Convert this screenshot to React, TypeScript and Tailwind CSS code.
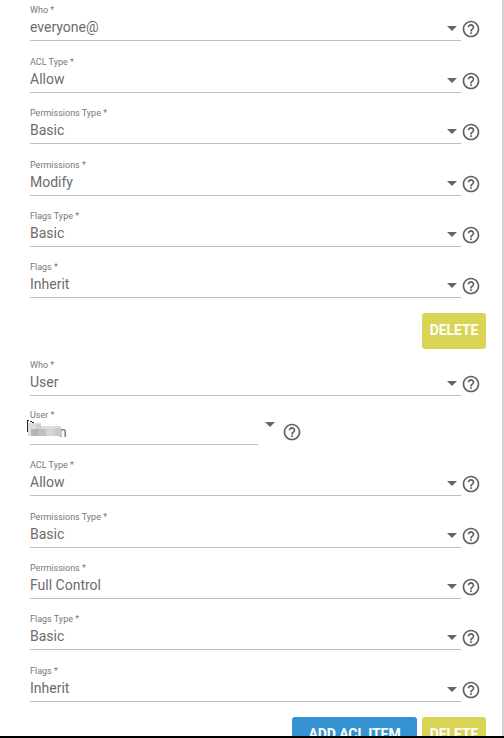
type FieldProps = { label: string; value: string; height: string };

function HelpIcon() {
  return (
    <svg viewBox="0 0 24 24" className="block h-5 w-5 shrink-0 fill-[#606060]">
      <path d="M11 18h2v-2h-2v2zm1-16C6.48 2 2 6.48 2 12s4.48 10 10 10 10-4.48 10-10S17.52 2 12 2zm0 18c-4.41 0-8-3.59-8-8s3.59-8 8-8 8 3.59 8 8-3.59 8-8 8zm0-14c-2.21 0-4 1.79-4 4h2c0-1.1.9-2 2-2s2 .9 2 2c0 2-3 1.75-3 5h2c0-2.25 3-2.5 3-5 0-2.21-1.79-4-4-4z" />
    </svg>
  );
}

function Arrow() {
  return (
    <svg viewBox="0 0 10 5" className="block h-[5px] w-[10px] shrink-0 fill-[#666666]">
      <path d="M0 0h10L5 5z" />
    </svg>
  );
}

function Label({ children }: { children: string }) {
  return <div className="h-3 pt-px text-[9px] leading-3 text-[#777777]">{children}</div>;
}

function Field({ label, value, height }: FieldProps) {
  return (
    <div className={`flex items-end ${height}`}>
      <div className="w-[431px] border-b border-[#bdbdbd]">
        <Label>{label}</Label>
        <div className="flex h-[25px] items-start justify-between pr-1">
          <span className="pt-[3px] text-sm leading-[18px] text-[#6c6c6c]">{value}</span>
          <span className="pt-[11px]">
            <Arrow />
          </span>
        </div>
      </div>
      <div className="pb-[2px]">
        <HelpIcon />
      </div>
    </div>
  );
}

function UserField() {
  return (
    <div className="flex h-[49px] items-end">
      <div className="w-[228px] border-b border-[#bdbdbd]">
        <Label>User *</Label>
        <div className="relative h-[24px] text-sm text-[#6c6c6c]">
          <span className="absolute top-[3px] left-[29px] leading-[18px]">n</span>
          <svg viewBox="0 0 36 18" className="absolute -top-px -left-[3px] h-[18px] w-9" shapeRendering="crispEdges">
            <path d="M1 4h13v3h20v10H1z" fill="#dddddd" />
            <path d="M4 10h7v7H4z" fill="#b5b5b5" />
            <path d="M11 10h8v7h-8z" fill="#c0c0c0" />
            <path d="M19 10h9v7h-9z" fill="#d4d4d4" />
            <path d="M28 9h6v8h-6z" fill="#c9c9c9" />
            <path d="M9 5h5v5H9z" fill="#cdd1d4" />
            <path d="M0 1h1v12H0zM1 1h1v1H1zM3 2h2v1H3zM5 3h2v1H5z" fill="#222222" />
          </svg>
        </div>
      </div>
      <div className="flex items-start pl-[7px]">
        <Arrow />
        <div className="h-[23px] pl-[7px]">
          <HelpIcon />
        </div>
      </div>
    </div>
  );
}

const button = "flex h-9 items-center justify-center rounded-[3px] pb-[2px] text-sm font-bold tracking-[-0.1px] text-white";

export default function App() {
  return (
    <div className="h-[738px] w-[504px] overflow-hidden border-b-2 border-black bg-white font-[Roboto,sans-serif]">
      <div className="h-[736px] overflow-hidden border-r-2 border-[#d2d2d2] pl-[30px]">
        <Field label="Who *" value="everyone@" height="h-[41px]" />
        <Field label="ACL Type *" value="Allow" height="h-[52px]" />
        <Field label="Permissions Type *" value="Basic" height="h-[51px]" />
        <Field label="Permissions *" value="Modify" height="h-[52px]" />
        <Field label="Flags Type *" value="Basic" height="h-[51px]" />
        <Field label="Flags *" value="Inherit" height="h-[51px]" />
        <div className="flex justify-end pt-[15px] pr-4">
          <button className={`${button} w-16 bg-[#d9d453]`}>DELETE</button>
        </div>
        <Field label="Who *" value="User" height="h-[47px]" />
        <UserField />
        <Field label="ACL Type *" value="Allow" height="h-[51px]" />
        <Field label="Permissions Type *" value="Basic" height="h-[52px]" />
        <Field label="Permissions *" value="Full Control" height="h-[51px]" />
        <Field label="Flags Type *" value="Basic" height="h-[51px]" />
        <Field label="Flags *" value="Inherit" height="h-[52px]" />
        <div className="flex justify-end gap-[5px] pt-[15px] pr-4">
          <button className={`${button} w-[125px] bg-[#3593d2]`}>ADD ACL ITEM</button>
          <button className={`${button} w-16 bg-[#d9d453]`}>DELETE</button>
        </div>
      </div>
    </div>
  );
}
